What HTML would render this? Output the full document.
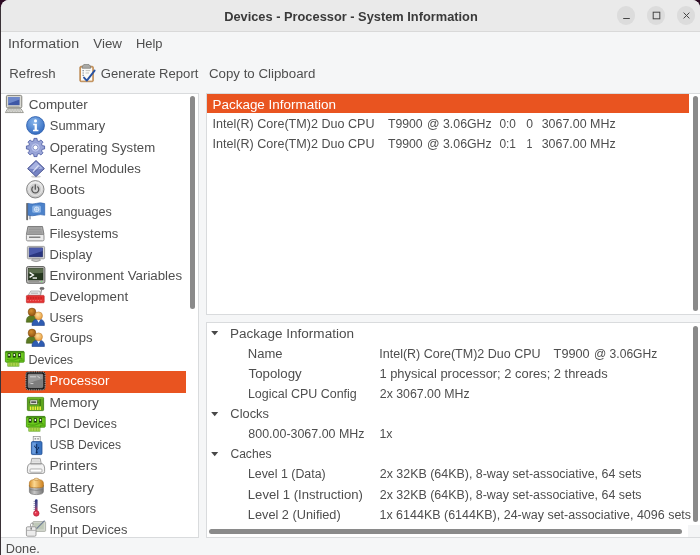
<!DOCTYPE html><html><head><meta charset="utf-8"><title>System Information</title><style>
*{margin:0;padding:0;box-sizing:border-box}
html,body{width:700px;height:555px;overflow:hidden;background:#2c0a22}
body{font-family:"Liberation Sans",sans-serif;font-size:12.5px;color:#4e4e4e;position:relative}
.a{position:absolute}
.tx{position:absolute;white-space:pre;line-height:16px;height:16px;transform-origin:0 0}
#txt{left:0;top:0;width:700px;height:555px;will-change:transform}
.ic{position:absolute;display:block;overflow:visible}
#win{left:1px;top:0;width:699px;height:555px;background:#f5f6f7;border-radius:8px 8px 0 0;overflow:hidden}
#edge{left:0;top:7px;width:1px;height:548px;background:#3a3237}
#tb{left:0;top:0;width:699px;height:32px;background:#eaeaea;border-bottom:1px solid #d9d9d9}
.wb{width:18.6px;height:18.6px;border-radius:50%;background:#dcdcdc;top:6px}
.pane{background:#fff;border:1px solid #d9dbdd}
.sb{background:#8a8a8a;border-radius:2.5px}
</style></head><body>
<div class="a" id="edge"></div>
<div class="a" id="win">
 <div class="a" id="tb"></div>
 <div class="a wb" style="left:615.5px"></div><div class="a wb" style="left:645.5px"></div><div class="a wb" style="left:675.5px"></div>
 <svg class="ic" style="left:615.5px;top:5.6px" width="80" height="19" viewBox="0 0 80 19" fill="none" stroke="#454545" stroke-width="1">
  <path d="M6.2 12.5h6.6"/><rect x="36.2" y="6.2" width="6.6" height="6.6"/><path d="M66.6 6.6l5.8 5.8M72.4 6.6l-5.8 5.8"/>
 </svg>
</div>
<div class="a pane" style="left:1px;top:93px;width:198px;height:445px;border-left:0"></div>
<div class="a" style="left:1px;top:371px;width:185.4px;height:22px;background:#e95420"></div>
<div class="a sb" style="left:190px;top:96px;width:5px;height:213px"></div>
<div class="a pane" style="left:206px;top:93px;width:496px;height:222px"></div>
<div class="a" style="left:207px;top:94px;width:482.2px;height:19px;background:#e95420"></div>
<div class="a sb" style="left:693px;top:96px;width:5px;height:215px"></div>
<div class="a pane" style="left:206px;top:322px;width:496px;height:216px"></div>
<div class="a sb" style="left:693px;top:326px;width:5px;height:196px"></div>
<div class="a" style="left:688px;top:525px;width:12px;height:12px;background:#f4f5f6"></div>
<div class="a sb" style="left:209px;top:529px;width:472.5px;height:5px"></div>
<svg class="ic" style="left:78.8px;top:64px" width="17" height="18.4" viewBox="0 0 17 18.4">
<rect x="0.7" y="2.2" width="13.8" height="15.6" rx="1.4" fill="#c9935a" stroke="#b07a3e" stroke-width="0.6"/>
<rect x="2" y="3.6" width="11.2" height="13" fill="#fbfbf8"/>
<path d="M4.8 0.5h5.2l.8 1.4h.8v2.4H3.2V1.9h.8z" fill="#a9a9a6" stroke="#6e6e6a" stroke-width="0.6" stroke-linejoin="round"/>
<path d="M3.4 6.6h1.6M3.4 9h1.6M3.4 11.4h1.6" stroke="#8f9aa8" stroke-width="1.1"/>
<path d="M6.6 6.6h4.6M6.6 9h3.4" stroke="#b4b4ae" stroke-width="0.8"/>
<path d="M5 13.6l2.8 3 7.8-10" fill="none" stroke="#2852a2" stroke-width="1.9" stroke-linecap="round" stroke-linejoin="round"/>
</svg>
<svg class="ic" style="left:5px;top:94.6px" width="18.8" height="18.4" viewBox="0 0 18.8 18.4">
<rect x="1.4" y="0.4" width="15.4" height="12.4" rx="1.2" fill="#d9d9d3" stroke="#77776f" stroke-width="0.9"/>
<rect x="3.2" y="2" width="11.4" height="8.2" fill="#3f58a6"/>
<path d="M3.2 2h11.4v2.6L3.2 8.8z" fill="#7f98d6" opacity=".75"/>
<path d="M3.4 11.4h11" stroke="#a9a9a2" stroke-width="0.8"/>
<path d="M2.6 13.7h13.4l2.4 3.9H0.4z" fill="#ecece8" stroke="#85857e" stroke-width="0.8" stroke-linejoin="round"/>
<path d="M3 15h12.4M2.2 16.2h14.2" stroke="#8f8f88" stroke-width="0.7" stroke-dasharray="1.1 0.5"/>
</svg><svg class="ic" style="left:26.2px;top:116.4px" width="19" height="19" viewBox="0 0 19 19">
<defs><radialGradient id="gs" cx=".42" cy=".3" r=".75"><stop offset="0" stop-color="#86b4ea"/><stop offset="1" stop-color="#2f68bf"/></radialGradient></defs>
<circle cx="9.5" cy="9.5" r="8.9" fill="url(#gs)" stroke="#2c5fae" stroke-width="0.9"/>
<circle cx="9.5" cy="4.9" r="1.55" fill="#fff"/>
<path d="M7.2 7.7h3.7v6h1.5v1.5H7V13.7h1.6V9.2H7.2z" fill="#fff"/>
</svg><svg class="ic" style="left:26.2px;top:138.2px" width="19" height="19" viewBox="0 0 19 19">
<g transform="translate(9.5 9.5)">
<path d="M-1.74 -6.78L-1.51 -9.08L1.51 -9.08L1.74 -6.78L3.56 -6.03L5.35 -7.49L7.49 -5.35L6.03 -3.56L6.78 -1.74L9.08 -1.51L9.08 1.51L6.78 1.74L6.03 3.56L7.49 5.35L5.35 7.49L3.56 6.03L1.74 6.78L1.51 9.08L-1.51 9.08L-1.74 6.78L-3.56 6.03L-5.35 7.49L-7.49 5.35L-6.03 3.56L-6.78 1.74L-9.08 1.51L-9.08 -1.51L-6.78 -1.74L-6.03 -3.56L-7.49 -5.35L-5.35 -7.49L-3.56 -6.03z" fill="#9aa6d8" stroke="#5160a6" stroke-width="0.9" stroke-linejoin="round"/>
<circle r="4.6" fill="#b9c3ea" stroke="#8692cc" stroke-width="0.6"/>
<circle r="2.4" fill="#fff" stroke="#6f7cba" stroke-width="0.7"/>
</g>
</svg><svg class="ic" style="left:27px;top:159.6px" width="18" height="18" viewBox="0 0 18 18">
<ellipse cx="9" cy="16.6" rx="5" ry="1.2" fill="#000" opacity=".18"/>
<path d="M9 0.5L17.4 8.6 9 16.6 0.6 8.6z" fill="#7684c4" stroke="#414b8a" stroke-width="0.9" stroke-linejoin="round"/>
<path d="M9 1.8L16 8.6 9 9.6 2 8.6z" fill="#aeb8e4" opacity=".9"/>
<path d="M6 11.6l5.6-6.2" stroke="#e0e5f8" stroke-width="1.1"/>
<path d="M7.6 12.4l5-5.4" stroke="#5a669f" stroke-width="0.7"/>
</svg><svg class="ic" style="left:26.2px;top:180px" width="18.6" height="18.6" viewBox="0 0 18.6 18.6">
<defs><linearGradient id="gb" x1="0" y1="0" x2="0" y2="1"><stop offset="0" stop-color="#f2f2f2"/><stop offset="1" stop-color="#c2c2c2"/></linearGradient></defs>
<circle cx="9.3" cy="9.3" r="8.7" fill="url(#gb)" stroke="#7a7a7a" stroke-width="0.9"/>
<circle cx="9.3" cy="9.3" r="6.3" fill="#cfcfcf" stroke="#efefef" stroke-width="0.7"/>
<path d="M6.9 6.9a3.5 3.5 0 1 0 4.8 0" fill="none" stroke="#565656" stroke-width="1.3" stroke-linecap="round"/>
<path d="M9.3 4.8v4.4" stroke="#565656" stroke-width="1.3" stroke-linecap="round"/>
</svg><svg class="ic" style="left:26.4px;top:203px" width="19" height="17.4" viewBox="0 0 19 17.4">
<rect x="0.2" y="0" width="1.9" height="17.2" rx=".6" fill="#6a6a6a"/>
<path d="M2.1 0.4q4 1.2 8.2 0t8.4 .2v11.6q-4.2-1.2-8.4 0t-8.2 0z" fill="#4c82ca" stroke="#3465b0" stroke-width="0.7"/>
<path d="M4 12.4v4" stroke="#4f5f7a" stroke-width="0.9"/>
<rect x="6.2" y="2.6" width="8.8" height="7.2" rx="1.6" fill="#9cc0ee" opacity=".75"/>
<circle cx="10.7" cy="6.3" r="2.3" fill="none" stroke="#e6f0fc" stroke-width="0.8"/>
<path d="M8.4 6.3h4.6M10.7 4v4.6" stroke="#e6f0fc" stroke-width="0.6"/>
</svg><svg class="ic" style="left:26.2px;top:225.8px" width="18.4" height="15.4" viewBox="0 0 18.4 15.4">
<path d="M1.9 0.5h14.6l1.5 8H0.4z" fill="#adadad" stroke="#747474" stroke-width="0.9" stroke-linejoin="round"/>
<path d="M3.4 2h11.6M3 3.6h12.4M2.6 5.2h13.2M2.2 6.8h14" stroke="#8c8c8c" stroke-width="0.7"/>
<rect x="0.4" y="8.4" width="17.6" height="6.5" rx="1.3" fill="#ececec" stroke="#858585" stroke-width="0.9"/>
<rect x="3" y="10.7" width="11.4" height="0.9" fill="#3a3a3a"/>
</svg><svg class="ic" style="left:26.8px;top:246px" width="18" height="16.4" viewBox="0 0 18 16.4">
<rect x="0.4" y="0.4" width="17.2" height="12.4" rx="1" fill="#d6d6d6" stroke="#8d8d8d" stroke-width="0.8"/>
<rect x="2.1" y="1.9" width="13.6" height="9" fill="#2a3680" stroke="#1f285f" stroke-width="0.5"/>
<path d="M2.1 1.9h13.6v3.2L2.1 9.6z" fill="#5565b8" opacity=".75"/>
<path d="M5.4 12.8h7.2l.8 1.6q-4.4 2.6-8.8 0z" fill="#c9c9c9" stroke="#8d8d8d" stroke-width="0.7"/>
</svg><svg class="ic" style="left:26.2px;top:266px" width="19.4" height="17.8" viewBox="0 0 19.4 17.8">
<rect x="0.5" y="0.5" width="18.4" height="16.8" rx="1.8" fill="#b4b4b0" stroke="#5f5f5c" stroke-width="0.9"/>
<rect x="2.4" y="2.4" width="14.6" height="11.6" fill="#26381f" stroke="#1a2615" stroke-width="0.5"/>
<path d="M2.4 2.4h14.6v4.4q-7 1-14.6 0z" fill="#6f8160" opacity=".7"/>
<path d="M3.6 6.6l3.8 2.4-3.8 2.4" fill="none" stroke="#fff" stroke-width="1.3"/>
<rect x="6.6" y="11.4" width="4.4" height="1.3" fill="#fff"/>
<path d="M3 15.6h10" stroke="#8a8a86" stroke-width="0.8"/><circle cx="15.6" cy="15.6" r=".6" fill="#6f6"/>
</svg><svg class="ic" style="left:26.2px;top:286.8px" width="18.6" height="16.2" viewBox="0 0 18.6 16.2">
<ellipse cx="16" cy="1.5" rx="2.2" ry="1.2" fill="#6e6e6e" stroke="#555" stroke-width="0.4"/>
<path d="M15.6 2.4l-1 5.2" stroke="#8a8a8a" stroke-width="1.1"/>
<path d="M2 8.6l2.8-4.6h8.8l.8 2v2.6z" fill="#e6e6e6" stroke="#9a9a9a" stroke-width="0.7" stroke-linejoin="round"/>
<path d="M5 6.2h7" stroke="#b5b5b5" stroke-width="1.2"/>
<rect x="0.4" y="8.4" width="17.8" height="7.4" rx="0.8" fill="#e33232" stroke="#c01e1e" stroke-width="0.6"/>
<path d="M1.4 11h15.8" stroke="#b81c1c" stroke-width="1" stroke-dasharray="1.6 1"/>
<path d="M1.4 13.6h15.8" stroke="#f58a8a" stroke-width="0.8" stroke-dasharray="1.2 1.4"/>
</svg><svg class="ic" style="left:26.2px;top:307.8px" width="18.6" height="18" viewBox="0 0 18.6 18">
<defs><radialGradient id="gu1a" cx=".4" cy=".35" r=".7"><stop offset="0" stop-color="#d48e30"/><stop offset="1" stop-color="#8c5212"/></radialGradient>
<radialGradient id="gu2a" cx=".4" cy=".35" r=".7"><stop offset="0" stop-color="#fde0a0"/><stop offset="1" stop-color="#e89a38"/></radialGradient></defs>
<path d="M0.3 14.2q-.4-6.6 5.6-6.8 5.6.2 5.4 6.8z" fill="#5b7a22" stroke="#425c14" stroke-width="0.6"/>
<circle cx="6" cy="4" r="3.9" fill="url(#gu1a)" stroke="#7a450c" stroke-width="0.5"/>
<path d="M6 17.5q-.4-6.4 6.4-6.6 6.6.2 6 6.6z" fill="#2f5cb2" stroke="#1e4288" stroke-width="0.6"/>
<path d="M10.8 11.2l1.8 3.6 1.8-3.6z" fill="#fff"/>
<circle cx="12.6" cy="7.8" r="3.9" fill="url(#gu2a)" stroke="#b8782a" stroke-width="0.5"/>
</svg><svg class="ic" style="left:26.2px;top:329px" width="18.6" height="18" viewBox="0 0 18.6 18">
<defs><radialGradient id="gu1b" cx=".4" cy=".35" r=".7"><stop offset="0" stop-color="#d48e30"/><stop offset="1" stop-color="#8c5212"/></radialGradient>
<radialGradient id="gu2b" cx=".4" cy=".35" r=".7"><stop offset="0" stop-color="#fde0a0"/><stop offset="1" stop-color="#e89a38"/></radialGradient></defs>
<path d="M0.3 14.2q-.4-6.6 5.6-6.8 5.6.2 5.4 6.8z" fill="#5b7a22" stroke="#425c14" stroke-width="0.6"/>
<circle cx="6" cy="4" r="3.9" fill="url(#gu1b)" stroke="#7a450c" stroke-width="0.5"/>
<path d="M6 17.5q-.4-6.4 6.4-6.6 6.6.2 6 6.6z" fill="#2f5cb2" stroke="#1e4288" stroke-width="0.6"/>
<path d="M10.8 11.2l1.8 3.6 1.8-3.6z" fill="#fff"/>
<circle cx="12.6" cy="7.8" r="3.9" fill="url(#gu2b)" stroke="#b8782a" stroke-width="0.5"/>
</svg><svg class="ic" style="left:5px;top:351.2px" width="19.6" height="15.8" viewBox="0 0 19.6 15.8">
<rect x="0.4" y="0.4" width="18.8" height="10.8" rx="0.8" fill="#6ac81c" stroke="#3e8c0e" stroke-width="0.8"/>
<path d="M0.8 1h18" stroke="#2e6a0a" stroke-width="1"/>
<rect x="2.6" y="2.2" width="3" height="4.4" fill="#1f3d10"/><rect x="7.8" y="2.2" width="3" height="4.4" fill="#1f3d10"/><rect x="13" y="2.2" width="3" height="4.4" fill="#1f3d10"/>
<rect x="3.4" y="3" width="1.4" height="2" fill="#eef6dc"/><rect x="8.6" y="3" width="1.4" height="2" fill="#eef6dc"/><rect x="13.8" y="3" width="1.4" height="2" fill="#eef6dc"/>
<path d="M2 8.2q5 2 9 0t6.4 0" fill="none" stroke="#4fa012" stroke-width="1.2"/>
<path d="M14.6 11.2v-2h4.2" fill="none" stroke="#3e8c0e" stroke-width="0.6"/>
<rect x="2.8" y="11.2" width="11.2" height="4" fill="#c6e060" stroke="#4c9a12" stroke-width="0.6"/>
<path d="M4.2 11.6v3.4M5.8 11.6v3.4M7.4 11.6v3.4M9 11.6v3.4M10.6 11.6v3.4M12.2 11.6v3.4" stroke="#6ab01e" stroke-width="0.7"/>
</svg><svg class="ic" style="left:25px;top:371px" width="21" height="19.8" viewBox="0 0 21 19.8">
<rect x="0.6" y="0.6" width="19.8" height="18.6" rx="3.2" fill="#1e1e1e"/>
<rect x="0.9" y="0.9" width="19.2" height="18" rx="2.9" fill="none" stroke="#d8d8d8" stroke-width="0.9" stroke-dasharray="0.9 0.9"/>
<rect x="2.4" y="2.4" width="16.2" height="15" rx="1.6" fill="#1e1e1e"/>
<rect x="3.2" y="3.2" width="14.6" height="13.4" rx="1" fill="#7d7d7d" stroke="#a5a5a5" stroke-width="0.6"/>
<path d="M3.4 3.4h14.2v4.4q-7 1.6-14.2 5z" fill="#a3a3a3" opacity=".75"/>
<path d="M5 5.8h6M12.4 5.2l2.4 1.6M5.4 12.6h3" stroke="#dcdcdc" stroke-width="0.9"/>
</svg><svg class="ic" style="left:27px;top:396.8px" width="17" height="14" viewBox="0 0 17 14">
<rect x="0.4" y="0.4" width="16.2" height="13.2" rx="0.8" fill="#5ea61e" stroke="#3d7a0e" stroke-width="0.8"/>
<path d="M0.8 1h15.4" stroke="#8fd444" stroke-width="0.7"/>
<rect x="3" y="3" width="7.4" height="4.4" fill="#e4e8dc" stroke="#4e5c36" stroke-width="0.6"/>
<rect x="4.2" y="4.3" width="5" height="1.8" fill="#555"/>
<path d="M2 5.2h1M10.4 5.2h1.4" stroke="#2e5a0c" stroke-width="0.8"/>
<rect x="12.4" y="2" width="1.6" height="7" fill="#3f7f10"/>
<path d="M3.6 9.4v3.6M6 9.4v3.6M8.4 9.4v3.6M10.8 9.4v3.6M13.2 9.4v3.6" stroke="#f2ee3c" stroke-width="1.5"/>
</svg><svg class="ic" style="left:26.2px;top:415.8px" width="19.8" height="16" viewBox="0 0 19.8 16">
<rect x="0.4" y="0.4" width="18.8" height="10.8" rx="0.8" fill="#6ac81c" stroke="#3e8c0e" stroke-width="0.8"/>
<path d="M0.8 1h18" stroke="#2e6a0a" stroke-width="1"/>
<rect x="2.6" y="2.2" width="3" height="4.4" fill="#1f3d10"/><rect x="7.8" y="2.2" width="3" height="4.4" fill="#1f3d10"/><rect x="13" y="2.2" width="3" height="4.4" fill="#1f3d10"/>
<rect x="3.4" y="3" width="1.4" height="2" fill="#eef6dc"/><rect x="8.6" y="3" width="1.4" height="2" fill="#eef6dc"/><rect x="13.8" y="3" width="1.4" height="2" fill="#eef6dc"/>
<path d="M2 8.2q5 2 9 0t6.4 0" fill="none" stroke="#4fa012" stroke-width="1.2"/>
<path d="M14.6 11.2v-2h4.2" fill="none" stroke="#3e8c0e" stroke-width="0.6"/>
<rect x="2.8" y="11.2" width="11.2" height="4" fill="#c6e060" stroke="#4c9a12" stroke-width="0.6"/>
<path d="M4.2 11.6v3.4M5.8 11.6v3.4M7.4 11.6v3.4M9 11.6v3.4M10.6 11.6v3.4M12.2 11.6v3.4" stroke="#6ab01e" stroke-width="0.7"/>
</svg><svg class="ic" style="left:30.8px;top:435.6px" width="11.4" height="19" viewBox="0 0 11.4 19">
<rect x="2.2" y="0.4" width="7" height="5.6" fill="#f4f4f4" stroke="#8a8a8a" stroke-width="0.7"/>
<rect x="3.6" y="2" width="1.5" height="1.6" fill="#9a9a9a"/><rect x="6.3" y="2" width="1.5" height="1.6" fill="#9a9a9a"/>
<rect x="0.4" y="5.6" width="10.6" height="13" rx="1.2" fill="#3a74c2" stroke="#1f4c92" stroke-width="0.8"/>
<path d="M1.2 6.4h3.6v11.4H2.2q-1 0-1-1z" fill="#80aee8" opacity=".7"/>
<path d="M5.7 8v8.6M5.7 12.6L3.8 11V9.6M5.7 14l1.9-1.6V11" fill="none" stroke="#0f2c5c" stroke-width="1"/>
<circle cx="5.7" cy="16.4" r="1" fill="#0f2c5c"/>
</svg><svg class="ic" style="left:26.8px;top:458px" width="18" height="15.8" viewBox="0 0 18 15.8">
<path d="M4.8 0.4h8.4l1.2 6.2H3.6z" fill="#eeeeee" stroke="#8c8c8c" stroke-width="0.8" stroke-linejoin="round"/>
<path d="M5.4 2h7.2M5 3.8h8" stroke="#c9c9c9" stroke-width="0.8"/>
<path d="M3 5.6h12q2.6 1 2.6 4.4v3.6q0 1.8-1.8 1.8H2.2q-1.8 0-1.8-1.8V10q0-3.4 2.6-4.4z" fill="#f2f2f2" stroke="#838383" stroke-width="0.8" stroke-linejoin="round"/>
<path d="M3.4 6.6h11.2" stroke="#b5b5b5" stroke-width="0.8"/>
<rect x="3" y="11" width="12" height="3.2" rx=".8" fill="#fff" stroke="#8f8f8f" stroke-width="0.7"/>
</svg><svg class="ic" style="left:28.8px;top:478.2px" width="14.8" height="17" viewBox="0 0 14.8 17">
<defs><linearGradient id="gbt" x1="0" y1="0" x2="1" y2="0"><stop offset="0" stop-color="#858585"/><stop offset=".35" stop-color="#c8c8c8"/><stop offset="1" stop-color="#767676"/></linearGradient>
<linearGradient id="gbo" x1="0" y1="0" x2="1" y2="0"><stop offset="0" stop-color="#d8902c"/><stop offset=".35" stop-color="#fbd892"/><stop offset="1" stop-color="#cc801e"/></linearGradient></defs>
<path d="M0.4 7h14v6.6q0 3-7 3t-7-3z" fill="url(#gbt)" stroke="#666" stroke-width="0.6"/>
<path d="M0.4 4.8q0-3.4 7-3.4t7 3.4V8.2q0 1.6-7 1.6t-7-1.6z" fill="url(#gbo)" stroke="#ad6e1c" stroke-width="0.6"/>
<ellipse cx="7.4" cy="1.3" rx="2.5" ry="1.1" fill="#f6d9a0" stroke="#ad6e1c" stroke-width="0.5"/>
<path d="M1 11.6q6.4 1.6 12.8 0" fill="none" stroke="#6c6c6c" stroke-width="0.6"/>
</svg><svg class="ic" style="left:33.2px;top:498.8px" width="6.4" height="17.6" viewBox="0 0 6.4 17.6">
<defs><linearGradient id="gse" x1="0" y1="0" x2="0" y2="1"><stop offset="0" stop-color="#26357e"/><stop offset=".5" stop-color="#5a4a8a"/><stop offset="1" stop-color="#d8324a"/></linearGradient></defs>
<rect x="2" y="0.3" width="2.6" height="13" rx="1.2" fill="url(#gse)"/>
<path d="M0.6 2.4h1.6M0.6 4.4h1.6M0.6 6.4h1.6M0.6 8.4h1.6M0.6 10.4h1.6" stroke="#4a4a7a" stroke-width="0.6"/>
<circle cx="3.3" cy="14.4" r="2.8" fill="#e2354d" stroke="#a81e34" stroke-width="0.6"/>
<circle cx="2.6" cy="13.6" r=".8" fill="#f8a0ac"/>
</svg><svg class="ic" style="left:26.2px;top:519.6px" width="20" height="16.6" viewBox="0 0 20 16.6">
<rect x="6.8" y="1.6" width="12.8" height="9.8" rx="0.8" fill="#d5d9d0" stroke="#9a9e94" stroke-width="0.7"/>
<rect x="8.2" y="3" width="9.6" height="6.4" fill="#bfc9b8"/>
<path d="M10.6 8.6L18.6 0.6" stroke="#6f7c96" stroke-width="1.2"/>
<path d="M4.6 7.2q-.6-3.6 1-4.2t2 1.600" fill="none" stroke="#8a8a8a" stroke-width="0.8"/>
<rect x="0.4" y="6.8" width="9.6" height="9.4" rx="1.2" fill="#ececec" stroke="#8a8a8a" stroke-width="0.8"/>
<path d="M0.6 10.4h9.2M5.2 6.8v3.6" stroke="#9f9f9f" stroke-width="0.7"/>
<rect x="4.5" y="7.6" width="1.4" height="2" rx=".6" fill="#7a7a7a"/>
</svg>
<svg class="ic" style="left:211.3px;top:331.40px" width="7.4" height="4.4" viewBox="0 0 8 5"><path d="M0 0h8L4 4.8z" fill="#484848"/></svg><svg class="ic" style="left:211.3px;top:411.72px" width="7.4" height="4.4" viewBox="0 0 8 5"><path d="M0 0h8L4 4.8z" fill="#484848"/></svg><svg class="ic" style="left:211.3px;top:451.88px" width="7.4" height="4.4" viewBox="0 0 8 5"><path d="M0 0h8L4 4.8z" fill="#484848"/></svg>
<div class="a" id="txt"><span class="tx" id="t0" style="left:0;top:9px;font-weight:bold;color:#3a3a3a;transform:translateX(224.14px) scaleX(1.0256);">Devices - Processor - System Information</span><span class="tx" id="t1" style="left:0;top:36px;transform:translateX(7.88px) scaleX(1.1409);">Information</span><span class="tx" id="t2" style="left:0;top:36px;transform:translateX(93.34px) scaleX(1.0652);">View</span><span class="tx" id="t3" style="left:0;top:36px;transform:translateX(135.94px) scaleX(1.0344);">Help</span><span class="tx" id="t4" style="left:0;top:66px;transform:translateX(9.31px) scaleX(1.0586);">Refresh</span><span class="tx" id="t5" style="left:0;top:66px;transform:translateX(100.84px) scaleX(1.0477);">Generate Report</span><span class="tx" id="t6" style="left:0;top:66px;transform:translateX(208.92px) scaleX(1.0637);">Copy to Clipboard</span><span class="tx" id="t7" style="left:0;top:97px;transform:translateX(28.67px) scaleX(1.0777);">Computer</span><span class="tx" id="t8" style="left:0;top:118px;transform:translateX(49.76px) scaleX(1.0351);">Summary</span><span class="tx" id="t9" style="left:0;top:140px;transform:translateX(49.73px) scaleX(1.0539);">Operating System</span><span class="tx" id="t10" style="left:0;top:161px;transform:translateX(49.52px) scaleX(1.0506);">Kernel Modules</span><span class="tx" id="t11" style="left:0;top:182px;transform:translateX(49.47px) scaleX(1.1052);">Boots</span><span class="tx" id="t12" style="left:0;top:204px;transform:translateX(49.57px) scaleX(1.0067);">Languages</span><span class="tx" id="t13" style="left:0;top:226px;transform:translateX(49.53px) scaleX(1.0417);">Filesystems</span><span class="tx" id="t14" style="left:0;top:247px;transform:translateX(49.53px) scaleX(1.0413);">Display</span><span class="tx" id="t15" style="left:0;top:268px;transform:translateX(49.51px) scaleX(1.0619);">Environment Variables</span><span class="tx" id="t16" style="left:0;top:289px;transform:translateX(49.50px) scaleX(1.0684);">Development</span><span class="tx" id="t17" style="left:0;top:310px;transform:translateX(49.61px) scaleX(1.0275);">Users</span><span class="tx" id="t18" style="left:0;top:330px;transform:translateX(49.69px) scaleX(1.0484);">Groups</span><span class="tx" id="t19" style="left:0;top:352px;transform:translateX(28.57px) scaleX(1.0025);">Devices</span><span class="tx" id="t20" style="left:0;top:373px;color:#fff;transform:translateX(49.51px) scaleX(1.0645);">Processor</span><span class="tx" id="t21" style="left:0;top:395px;transform:translateX(49.48px) scaleX(1.0928);">Memory</span><span class="tx" id="t22" style="left:0;top:416px;transform:translateX(49.60px) scaleX(0.9762);">PCI Devices</span><span class="tx" id="t23" style="left:0;top:437px;transform:translateX(49.67px) scaleX(0.9692);">USB Devices</span><span class="tx" id="t24" style="left:0;top:458px;transform:translateX(49.46px) scaleX(1.1130);">Printers</span><span class="tx" id="t25" style="left:0;top:480px;transform:translateX(49.45px) scaleX(1.1255);">Battery</span><span class="tx" id="t26" style="left:0;top:501px;transform:translateX(49.78px) scaleX(1.0091);">Sensors</span><span class="tx" id="t27" style="left:0;top:522px;transform:translateX(49.41px) scaleX(1.0306);">Input Devices</span><span class="tx" id="t28" style="left:0;top:97px;color:#fff;transform:translateX(212.50px) scaleX(1.0761);">Package Information</span><span class="tx" id="t29" style="left:0;top:116px;transform:translateX(212.44px) scaleX(1.0061);">Intel(R) Core(TM)2 Duo CPU</span><span class="tx" id="t30" style="left:0;top:116px;transform:translateX(387.92px) scaleX(0.9803);">T9900</span><span class="tx" id="t31" style="left:0;top:116px;transform:translateX(427.03px) scaleX(0.9876);">@ 3.06GHz</span><span class="tx" id="t32" style="left:0;top:116px;transform:translateX(499.44px) scaleX(0.9443);">0:0</span><span class="tx" id="t33" style="left:0;top:116px;transform:translateX(526.13px) scaleX(0.9705);">0</span><span class="tx" id="t34" style="left:0;top:116px;transform:translateX(541.63px) scaleX(0.9951);">3067.00 MHz</span><span class="tx" id="t35" style="left:0;top:136px;transform:translateX(212.44px) scaleX(1.0061);">Intel(R) Core(TM)2 Duo CPU</span><span class="tx" id="t36" style="left:0;top:136px;transform:translateX(387.92px) scaleX(0.9803);">T9900</span><span class="tx" id="t37" style="left:0;top:136px;transform:translateX(427.03px) scaleX(0.9876);">@ 3.06GHz</span><span class="tx" id="t38" style="left:0;top:136px;transform:translateX(499.44px) scaleX(0.9514);">0:1</span><span class="tx" id="t39" style="left:0;top:136px;transform:translateX(526.59px) scaleX(0.8500);">1</span><span class="tx" id="t40" style="left:0;top:136px;transform:translateX(541.63px) scaleX(0.9951);">3067.00 MHz</span><span class="tx" id="t41" style="left:0;top:326px;transform:translateX(229.89px) scaleX(1.0823);">Package Information</span><span class="tx" id="t42" style="left:0;top:346px;transform:translateX(247.83px) scaleX(1.0421);">Name</span><span class="tx" id="t43" style="left:0;top:346px;transform:translateX(379.24px) scaleX(1.0017);">Intel(R) Core(TM)2 Duo CPU</span><span class="tx" id="t44" style="left:0;top:346px;transform:translateX(553.61px) scaleX(1.0178);">T9900</span><span class="tx" id="t45" style="left:0;top:346px;transform:translateX(593.95px) scaleX(0.9672);">@ 3.06GHz</span><span class="tx" id="t46" style="left:0;top:366px;transform:translateX(248.60px) scaleX(1.0615);">Topology</span><span class="tx" id="t47" style="left:0;top:366px;transform:translateX(379.42px) scaleX(1.0330);">1 physical processor; 2 cores; 2 threads</span><span class="tx" id="t48" style="left:0;top:386px;transform:translateX(247.88px) scaleX(0.9985);">Logical CPU Config</span><span class="tx" id="t49" style="left:0;top:386px;transform:translateX(379.78px) scaleX(0.9869);">2x 3067.00 MHz</span><span class="tx" id="t50" style="left:0;top:406px;transform:translateX(230.35px) scaleX(1.0294);">Clocks</span><span class="tx" id="t51" style="left:0;top:426px;transform:translateX(248.36px) scaleX(0.9949);">800.00-3067.00 MHz</span><span class="tx" id="t52" style="left:0;top:426px;transform:translateX(379.46px) scaleX(0.9904);">1x</span><span class="tx" id="t53" style="left:0;top:446px;transform:translateX(230.39px) scaleX(0.9684);">Caches</span><span class="tx" id="t54" style="left:0;top:466px;transform:translateX(247.88px) scaleX(0.9907);">Level 1 (Data)</span><span class="tx" id="t55" style="left:0;top:466px;transform:translateX(379.78px) scaleX(0.9942);">2x 32KB (64KB), 8-way set-associative, 64 sets</span><span class="tx" id="t56" style="left:0;top:487px;transform:translateX(247.83px) scaleX(1.0474);">Level 1 (Instruction)</span><span class="tx" id="t57" style="left:0;top:487px;transform:translateX(379.78px) scaleX(0.9942);">2x 32KB (64KB), 8-way set-associative, 64 sets</span><span class="tx" id="t58" style="left:0;top:507px;transform:translateX(247.85px) scaleX(1.0200);">Level 2 (Unified)</span><span class="tx" id="t59" style="left:0;top:507px;transform:translateX(379.45px) scaleX(0.9988);">1x 6144KB (6144KB), 24-way set-associative, 4096 sets</span><span class="tx" id="t60" style="left:0;top:541px;transform:translateX(5.75px) scaleX(1.0195);">Done.</span></div>
</body></html>
